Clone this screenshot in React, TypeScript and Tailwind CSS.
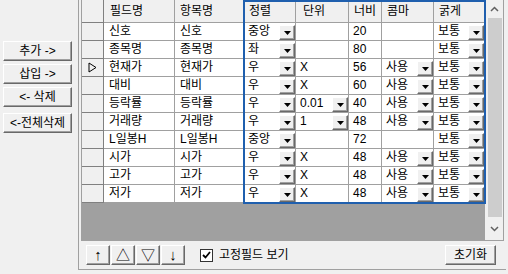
import React from 'react';

type Row = {
  name: string;
  item: string;
  align: string;
  unit: string;
  unitDrop?: boolean;
  width: string;
  comma: string;
  current?: boolean;
};

const rows: Row[] = [
  { name: '신호', item: '신호', align: '중앙', unit: '', width: '20', comma: '' },
  { name: '종목명', item: '종목명', align: '좌', unit: '', width: '80', comma: '' },
  { name: '현재가', item: '현재가', align: '우', unit: 'X', width: '56', comma: '사용', current: true },
  { name: '대비', item: '대비', align: '우', unit: 'X', width: '60', comma: '사용' },
  { name: '등락률', item: '등락률', align: '우', unit: '0.01', unitDrop: true, width: '40', comma: '사용' },
  { name: '거래량', item: '거래량', align: '우', unit: '1', unitDrop: true, width: '48', comma: '사용' },
  { name: 'L일봉H', item: 'L일봉H', align: '중앙', unit: '', width: '72', comma: '' },
  { name: '시가', item: '시가', align: '우', unit: 'X', width: '48', comma: '사용' },
  { name: '고가', item: '고가', align: '우', unit: 'X', width: '48', comma: '사용' },
  { name: '저가', item: '저가', align: '우', unit: 'X', width: '48', comma: '사용' },
];

// classic raised 3d button look
const raised =
  'bg-[#f0f0f0] border border-t-white border-l-white border-b-[#696969] border-r-[#696969] shadow-[inset_-1px_-1px_0_#a0a0a0]';

const DropBtn = () => (
  <span className={`${raised} w-[16px] h-[15px] shrink-0 flex items-center justify-center`}>
    <svg width="7" height="4" viewBox="0 0 7 4">
      <path d="M0 0h7L3.5 4z" fill="#000" />
    </svg>
  </span>
);

const Cell: React.FC<{ w: string; text?: string; drop?: boolean; pl?: string }> = ({ w, text, drop, pl = 'pl-[4px]' }) => (
  <div className={`${w} h-[18px] border-r border-b border-[#a0a0a0] bg-white flex items-end justify-between ${pl} overflow-hidden`}>
    <span className="self-center leading-[17px] whitespace-nowrap">{text}</span>
    {drop && <DropBtn />}
  </div>
);

const HeadCell: React.FC<{ w: string; text?: string; pl: string }> = ({ w, text, pl }) => (
  <div className={`${w} h-[23px] border-r border-b border-[#a0a0a0] bg-[#f0f0f0] flex items-center ${pl} leading-[22px] whitespace-nowrap`}>
    {text}
  </div>
);

const cols = ['w-[71px]', 'w-[69px]', 'w-[52px]', 'w-[53px]', 'w-[33px]', 'w-[52px]', 'w-[51px]'];

export default function App() {
  return (
    <div className="w-[508px] h-[274px] bg-[#f0f0f0] flex text-[12px] text-black font-['Liberation_Sans','Noto_Sans_CJK_KR',sans-serif] overflow-hidden">
      {/* left buttons */}
      <div className="w-[78px] shrink-0 pt-[41px] pl-[3px] flex flex-col gap-[3px]">
        <button className={`${raised} w-[69px] h-[20px] leading-[18px]`}>추가 -&gt;</button>
        <button className={`${raised} w-[69px] h-[20px] leading-[18px]`}>삽입 -&gt;</button>
        <button className={`${raised} w-[69px] h-[20px] leading-[18px]`}>&lt;- 삭제</button>
        <button className={`${raised} w-[69px] h-[20px] leading-[18px] mt-[3px]`}>&lt;-전체삭제</button>
      </div>

      {/* right panel */}
      <div className="w-[428px] h-[270px] shrink-0 border-l border-b border-[#a0a0a0] pl-[2px] flex flex-col">
        <div className="w-[423px] h-[241px] border-l border-r border-b border-[#a0a0a0] flex">
          <div className="relative w-[403px] flex flex-col bg-[#a0a0a0]">
            <div className="flex">
              <div className="w-[22px] h-[23px] border-r border-b border-[#808080] bg-[#f0f0f0]" />
              <HeadCell w={cols[0]} text="필드명" pl="pl-[6px]" />
              <HeadCell w={cols[1]} text="항목명" pl="pl-[5px]" />
              <HeadCell w={cols[2]} text="정렬" pl="pl-[5px]" />
              <HeadCell w={cols[3]} text="단위" pl="pl-[7px]" />
              <HeadCell w={cols[4]} text="너비" pl="pl-[5px]" />
              <HeadCell w={cols[5]} text="콤마" pl="pl-[5px]" />
              <HeadCell w={cols[6]} text="굵게" pl="pl-[5px]" />
            </div>
            {rows.map((r) => (
              <div key={r.name} className="flex">
                <div className="w-[22px] h-[18px] border-r border-b border-[#808080] bg-[#f0f0f0] flex items-center pl-[6px]">
                  {r.current && (
                    <svg width="9" height="11" viewBox="0 0 9 11">
                      <path d="M1 1L8 5.5L1 10z" fill="none" stroke="#000" strokeWidth="1" />
                    </svg>
                  )}
                </div>
                <Cell w={cols[0]} text={r.name} pl="pl-[5px]" />
                <Cell w={cols[1]} text={r.item} pl="pl-[5px]" />
                <Cell w={cols[2]} text={r.align} drop />
                <Cell w={cols[3]} text={r.unit} drop={r.unitDrop} />
                <Cell w={cols[4]} text={r.width} />
                <Cell w={cols[5]} text={r.comma} drop={!!r.comma} />
                <Cell w={cols[6]} text="보통" drop />
              </div>
            ))}
            {/* selection frame */}
            <div className="absolute left-[161px] top-0 w-[243px] h-[204px] border-2 border-[#1f5fae] pointer-events-none" />
          </div>

          {/* vertical scrollbar */}
          <div className="w-[18px] bg-[#f0f0f0] flex flex-col items-center border-l border-[#f0f0f0]">
            <div className="h-[18px] flex items-center justify-center">
              <svg width="9" height="6" viewBox="0 0 9 6">
                <path d="M1 5L4.5 1.5L8 5" fill="none" stroke="#606060" strokeWidth="1.5" />
              </svg>
            </div>
            <div className="w-[14px] h-[199px] bg-[#cdcdcd]" />
            <div className="flex-1 flex items-center justify-center">
              <svg width="9" height="6" viewBox="0 0 9 6">
                <path d="M1 1L4.5 4.5L8 1" fill="none" stroke="#606060" strokeWidth="1.5" />
              </svg>
            </div>
          </div>
        </div>

        {/* bottom bar */}
        <div className="flex-1 flex items-start pt-[4px] pl-[5px] pr-[10px]">
          <div className="flex gap-[1px]">
            <button className={`${raised} w-[24px] h-[20px] leading-[18px] text-[15px]`}>↑</button>
            <button className={`${raised} w-[24px] h-[20px] leading-[18px] text-[14px]`}>△</button>
            <button className={`${raised} w-[24px] h-[20px] leading-[18px] text-[14px]`}>▽</button>
            <button className={`${raised} w-[24px] h-[20px] leading-[18px] text-[15px]`}>↓</button>
          </div>
          <div className="ml-[15px] h-[20px] flex items-center gap-[6px]">
            <span className="w-[13px] h-[13px] border border-[#333] bg-white flex items-center justify-center">
              <svg width="9" height="8" viewBox="0 0 9 8">
                <path d="M1 4L3.5 6.5L8 1" fill="none" stroke="#000" strokeWidth="1.8" />
              </svg>
            </span>
            <span className="leading-[16px]">고정필드 보기</span>
          </div>
          <button className={`${raised} ml-auto w-[51px] h-[20px] leading-[18px]`}>초기화</button>
        </div>
      </div>
    </div>
  );
}
